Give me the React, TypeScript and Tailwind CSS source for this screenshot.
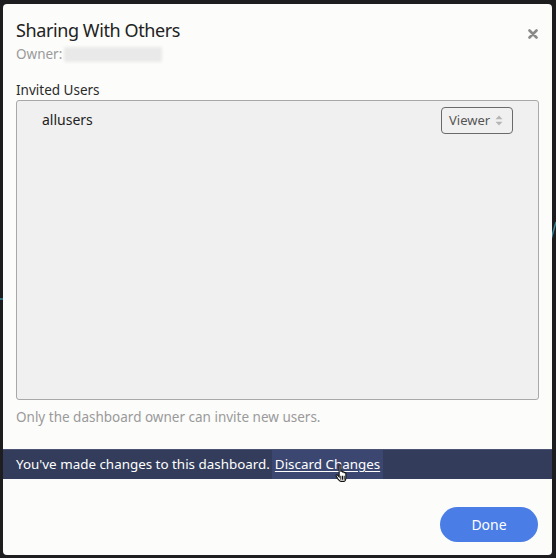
import React from "react";

export default function App() {
  return (
    <div
      className="w-[556px] h-[558px] bg-[#1d1d1f] relative overflow-hidden"
      style={{ fontFamily: '"Noto Sans", "Open Sans", sans-serif' }}
    >
      {/* faint chart lines behind modal */}
      <svg className="absolute left-0 top-0" width="556" height="558">
        <path d="M548 250 L556 222" stroke="#3a8a99" strokeWidth="1.5" fill="none" />
        <path d="M0 299 L4 299" stroke="#3a8a99" strokeWidth="1.5" fill="none" />
      </svg>
      <div className="absolute left-[3px] top-[4px] w-[549px] h-[551px] bg-[#fcfcfa] rounded-[4px] flex flex-col">
        <div className="flex items-start justify-between pl-[13px] pr-[14px] pt-[15px]">
          <div className="text-[18px] leading-[22px] text-[#222] tracking-[-0.4px]">Sharing With Others</div>
          <svg width="10" height="10" viewBox="0 0 10 10" className="mt-[10px]">
            <path d="M1.5 1.5 L8.5 8.5 M8.5 1.5 L1.5 8.5" stroke="#8a8a8a" strokeWidth="2.6" strokeLinecap="round" />
          </svg>
        </div>
        <div className="flex items-center pl-[13px] mt-[3px] h-[20px]">
          <span className="text-[13.5px] text-[#9a9a9a]">Owner:</span>
          <div className="ml-[2px] w-[98px] h-[15px] bg-[#e9e9e9] blur-[1.5px] rounded-[2px]" />
        </div>
        <div className="pl-[13px] mt-[17px] text-[13.5px] leading-[18px] text-[#2a2a2a]">Invited Users</div>
        <div className="mx-[13px] mt-[1px] h-[300px] bg-[#f0f0f0] border border-[#a8a8a8] rounded-[3px] flex items-start justify-between pl-[25px] pr-[25px] pt-[6px]">
          <div className="text-[14px] leading-[26px] text-[#222] mt-[0px]">allusers</div>
          <div className="w-[72px] h-[27px] border border-[#6a6a6a] rounded-[4px] flex items-center justify-between pl-[7px] pr-[9px]">
            <span className="text-[13px] text-[#555]">Viewer</span>
            <svg width="8" height="11" viewBox="0 0 8 11">
              <path d="M4 0.5 L7.5 4.2 L0.5 4.2 Z" fill="#b5b5b5" />
              <path d="M4 10.5 L7.5 6.8 L0.5 6.8 Z" fill="#b5b5b5" />
            </svg>
          </div>
        </div>
        <div className="pl-[13px] mt-[8px] text-[13.5px] leading-[18px] text-[#9a9a9a]">
          Only the dashboard owner can invite new users.
        </div>
        <div className="mt-[23px] h-[30px] bg-[#333d5b] border-t border-[#4a5472] flex items-center pl-[13px] text-[13.4px] text-white">
          <span>You've made changes to this dashboard.</span>
          <span className="relative ml-[2px] h-[29px] px-[3px] bg-[#3b4770] flex items-center">
            <span className="underline underline-offset-[2px]">Discard Changes</span>
            <svg className="absolute left-[63px] top-[14px]" width="15" height="19" viewBox="0 0 13 17">
              <path
                d="M3.5 1.2 C3.5 0.5 5 0.5 5 1.2 L5 7 C5 6.3 6.5 6.3 6.5 7 L6.5 7.6 C6.5 6.9 8 6.9 8 7.6 L8 8.2 C8 7.5 9.5 7.5 9.5 8.2 L9.5 12 C9.5 14 8.5 15.5 7.5 15.5 L5 15.5 C4 15.5 3.3 14.6 2.5 13.5 L0.8 10.8 C0.4 10.1 1.4 9.4 2 10 L3.5 11.5 Z"
                fill="#ffffff"
                stroke="#111"
                strokeWidth="1"
              />
              <path d="M5 10.5 L5 14 M6.5 10.5 L6.5 14 M8 10.5 L8 14" stroke="#111" strokeWidth="0.9" />
            </svg>
          </span>
        </div>
        <div className="flex justify-end pr-[14px] mt-[28px]">
          <div className="w-[98px] h-[35px] rounded-full bg-[#4a7de6] text-white text-[14px] flex items-center justify-center">
            Done
          </div>
        </div>
      </div>
    </div>
  );
}
